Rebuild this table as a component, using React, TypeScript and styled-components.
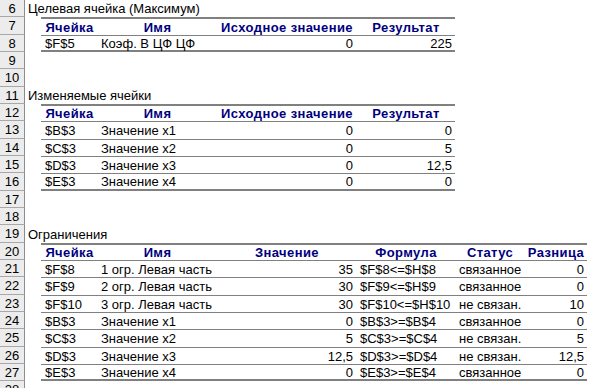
import styled, { createGlobalStyle } from 'styled-components';

type Kind = 'title' | 'head' | 'data' | 'last' | 'empty';

interface SheetRow {
    num: number;
    kind: Kind;
    cells?: string[];
    text?: string;
}

// widths of columns B..G, column A sits between the row numbers and the tables
const COLS = [56, 120, 139, 99, 69, 63];
const ALIGN: ('left' | 'right')[] = ['left', 'left', 'right', 'right', 'left', 'right'];
const ALIGN6: ('left' | 'right')[] = ['left', 'left', 'right', 'left', 'left', 'right'];
const ROW_H = 17.333;

const head4 = ['Ячейка', 'Имя', 'Исходное значение', 'Результат'];
const head6 = ['Ячейка', 'Имя', 'Значение', 'Формула', 'Статус', 'Разница'];

const rows: SheetRow[] = [
    {num: 6, kind: 'title', text: 'Целевая ячейка (Максимум)'},
    {num: 7, kind: 'head', cells: head4},
    {num: 8, kind: 'last', cells: ['$F$5', 'Коэф. В ЦФ ЦФ', '0', '225']},
    {num: 9, kind: 'empty'},
    {num: 10, kind: 'empty'},
    {num: 11, kind: 'title', text: 'Изменяемые ячейки'},
    {num: 12, kind: 'head', cells: head4},
    {num: 13, kind: 'data', cells: ['$B$3', 'Значение x1', '0', '0']},
    {num: 14, kind: 'data', cells: ['$C$3', 'Значение x2', '0', '5']},
    {num: 15, kind: 'data', cells: ['$D$3', 'Значение x3', '0', '12,5']},
    {num: 16, kind: 'last', cells: ['$E$3', 'Значение x4', '0', '0']},
    {num: 17, kind: 'empty'},
    {num: 18, kind: 'empty'},
    {num: 19, kind: 'title', text: 'Ограничения'},
    {num: 20, kind: 'head', cells: head6},
    {num: 21, kind: 'data', cells: ['$F$8', '1 огр. Левая часть', '35', '$F$8<=$H$8', 'связанное', '0']},
    {num: 22, kind: 'data', cells: ['$F$9', '2 огр. Левая часть', '30', '$F$9<=$H$9', 'связанное', '0']},
    {num: 23, kind: 'data', cells: ['$F$10', '3 огр. Левая часть', '30', '$F$10<=$H$10', 'не связан.', '10']},
    {num: 24, kind: 'data', cells: ['$B$3', 'Значение x1', '0', '$B$3>=$B$4', 'связанное', '0']},
    {num: 25, kind: 'data', cells: ['$C$3', 'Значение x2', '5', '$C$3>=$C$4', 'не связан.', '5']},
    {num: 26, kind: 'data', cells: ['$D$3', 'Значение x3', '12,5', '$D$3>=$D$4', 'не связан.', '12,5']},
    {num: 27, kind: 'last', cells: ['$E$3', 'Значение x4', '0', '$E$3>=$E$4', 'связанное', '0']},
    {num: 28, kind: 'empty'},
];

export default function App(): JSX.Element {
    return (
        <>
            <GlobalStyle/>
            <Sheet>
                {rows.map((row, i) => {
                    const h = Math.round((i + 1) * ROW_H) - Math.round(i * ROW_H);
                    const align = row.cells && row.cells.length === 6 ? ALIGN6 : ALIGN;
                    return (
                        <Row key={row.num} $h={h}>
                            <RowNumber>{row.num}</RowNumber>
                            <ColumnA>
                                {row.kind === 'title' && <Title>{row.text}</Title>}
                            </ColumnA>
                            {row.cells && (
                                <TableRow $kind={row.kind}>
                                    {row.cells.map((c, j) => (
                                        <Cell
                                            key={j}
                                            $w={COLS[j]}
                                            $align={row.kind === 'head' ? 'center' : align[j]}
                                            $head={row.kind === 'head'}
                                        >
                                            {c}
                                        </Cell>
                                    ))}
                                </TableRow>
                            )}
                        </Row>
                    );
                })}
            </Sheet>
        </>
    );
}

const GlobalStyle = createGlobalStyle`
  html, body {
    margin: 0;
    padding: 0;
    background: #ffffff;
    overflow: hidden;
  }

  body {
    font-family: "Liberation Sans", Arial, sans-serif;
    font-size: 13px;
    color: #000000;
  }
`;

const Sheet = styled.div`
  width: 595px;
  height: 388px;
  overflow: hidden;
  display: flex;
  flex-direction: column;
`;

const Row = styled.div<{ $h: number }>`
  display: flex;
  flex: none;
  height: ${p => p.$h}px;
`;

const RowNumber = styled.div`
  box-sizing: border-box;
  width: 25px;
  flex: none;
  height: 100%;
  background: #ececec;
  border-right: 1px solid #8c8c8c;
  border-bottom: 1px solid #a8a8a8;
  display: flex;
  align-items: center;
  justify-content: center;
  font-size: 13px;
  line-height: 1;
`;

const ColumnA = styled.div`
  width: 16px;
  flex: none;
  position: relative;
`;

const Title = styled.div`
  position: absolute;
  left: 3px;
  top: 0;
  bottom: 0;
  display: flex;
  align-items: center;
  white-space: nowrap;
`;

const TableRow = styled.div<{ $kind: Kind }>`
  box-sizing: border-box;
  display: flex;
  height: 100%;
  border-top: ${p => (p.$kind === 'head' ? '2px' : '1px')} solid #808080;
  border-bottom: ${p => (p.$kind === 'last' ? '2px solid #808080' : 'none')};
`;

const Cell = styled.div<{ $w: number; $align: string; $head: boolean }>`
  box-sizing: border-box;
  width: ${p => p.$w}px;
  flex: none;
  padding: 0 3px 0 4px;
  display: flex;
  align-items: center;
  justify-content: ${p => (p.$align === 'right' ? 'flex-end' : p.$align === 'center' ? 'center' : 'flex-start')};
  white-space: nowrap;
  font-weight: ${p => (p.$head ? 700 : 400)};
  letter-spacing: ${p => (p.$head ? '0.4px' : '0')};
  color: ${p => (p.$head ? '#000080' : '#000000')};
`;
